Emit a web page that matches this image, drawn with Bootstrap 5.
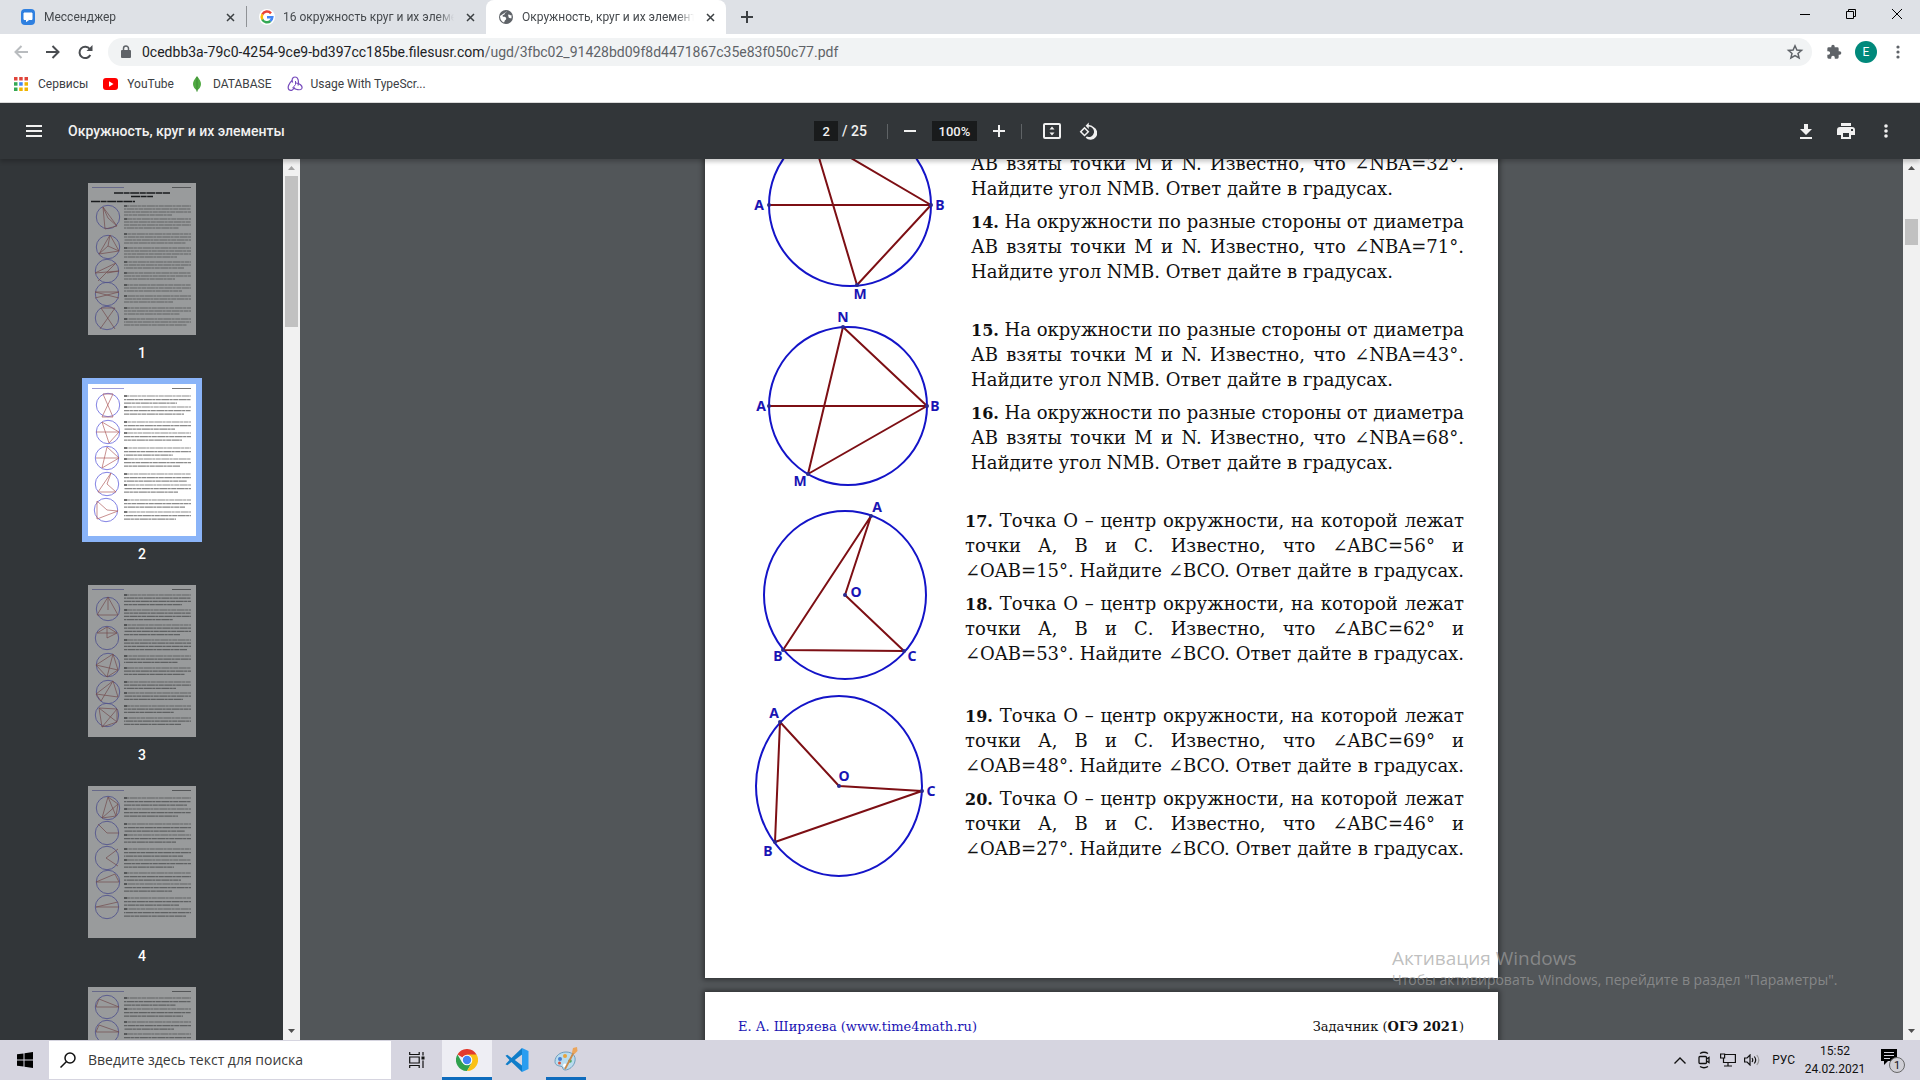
<!DOCTYPE html>
<html lang="ru">
<head>
<meta charset="utf-8">
<meta name="viewport" content="width=device-width, initial-scale=1">
<title>Окружность, круг и их элементы</title>
<link href="https://cdn.jsdelivr.net/npm/bootstrap@5.3.0/dist/css/bootstrap.min.css" rel="stylesheet">
<style>
  body { font-family: Roboto, "Open Sans", sans-serif; font-size: 12px; line-height: 16px; color: #3c4043; }
  button, input { font: inherit; color: inherit; }
  .plain { border: 0; background: none; padding: 0; display: inline-flex; align-items: center; justify-content: center; flex: none; color: inherit; }
  svg { flex: none; display: block; }

  /* browser tabs */
  .tabstrip { height: 34px; background: #dee1e6; }
  .tab { width: 239px; padding: 0 8px 0 12px; color: #45494d; }
  .tab-first { width: 247px; padding-left: 20px; border-right: 1px solid; border-image: linear-gradient(transparent 20%, #8f9296 20%, #8f9296 78%, transparent 78%) 1; }
  .tab-on { width: 240px; background: #fff; border-radius: 8px 8px 0 0; }
  .tab-text { flex: 1 1 0; min-width: 0; overflow: hidden; white-space: nowrap; -webkit-mask-image: linear-gradient(90deg, #000 90%, transparent); mask-image: linear-gradient(90deg, #000 90%, transparent); }
  .tab .plain { width: 16px; height: 16px; }
  .winbtn { width: 46px; height: 28px; color: #000; }

  /* address bar */
  .addressbar { height: 36px; padding: 4px 8px 4px 5px; background: #fff; color: #5f6368; }
  .navbtn { width: 32px; height: 28px; }
  .omnibox { height: 28px; border-radius: 14px; background: #f1f3f4; padding: 0 8px 0 10px; margin: 0 14px 0 7px; }
  .url { font-size: 14px; line-height: 20px; color: #5f6368; white-space: nowrap; }
  .url b { font-weight: 400; color: #202124; }
  .avatar { width: 22px; height: 22px; border-radius: 50%; background: #00897b; color: #fff; margin: 0 7px 0 13px; }
  .bookmarks { height: 33px; padding: 0 14px 4px; border-bottom: 1px solid #dcdcdc; background: #fff; gap: 15px; }
  .bookmarks a { color: #3c4043; text-decoration: none; gap: 8px; }

  /* viewer toolbar */
  .pdfbar { height: 56px; padding: 0 20px; background: #323639; color: #f1f1f1; font-size: 14px; font-weight: 500; position: relative; z-index: 2; box-shadow: 0 3px 4px rgba(0,0,0,.2); }
  .pdfbar input { background: #191b1c; border: 0; height: 20px; padding: 0; text-align: center; font-size: 13px; }
  .in-page { width: 24px; }
  .in-zoom { width: 45px; }
  .iconbtn { width: 28px; height: 28px; }
  .vline { width: 1px; height: 15px; background: #5f6366; }
  .vline-lead { margin-left: 20px; }
  .flex-even { flex: 1 1 0; }
  .bar-left { gap: 20px; }
  .bar-right { gap: 12px; }

  /* thumbnails */
  .thumbs { width: 283px; background: #323639; overflow: hidden; padding-top: 24px; }
  .thumb { width: 120px; height: 201px; padding-left: 6px; margin-left: 82px; color: #fff; text-align: center; font-weight: 500; font-size: 14px; }
  .thumb svg { background: #fff; opacity: .5; }
  .thumb span { display: block; width: 108px; padding-top: 10px; }
  .thumb-on svg { opacity: 1; outline: 6px solid #8ab4f8; }

  /* scroll tracks */
  .track { width: 17px; background: #f1f1f1; }
  .grip { width: 13px; background: #c1c1c1; }

  /* document */
  .viewer { background: #525659; overflow: hidden; font-family: "DejaVu Serif", "Liberation Serif", serif; color: #111; }
  .sheet { width: 793px; background: #fff; flex: none; box-shadow: 0 0 5px 2px rgba(0,0,0,.4); margin: 0 auto 14px; }
  .sheet-top { margin-top: -8px; height: 827px; padding-right: 34px; padding-left: 40px; }
  .sheet-next { padding: 27px 34px 0 33px; height: 120px; font-size: 13px; }
  .author { color: #1a14b4; }
  .task { gap: 26px; margin-bottom: 33px; }
  .task-b { gap: 20px; margin-bottom: 37px; }
  .task svg { overflow: visible; }
  .task-text { flex: 1 1 0; min-width: 0; }
  .task p { margin: 0 0 8px; font-size: 18px; line-height: 25px; }
  .task p:last-child { margin-bottom: 0; }
  .task b { font-size: 16px; line-height: 20px; }
  .ln { display: block; text-align: justify; text-align-last: justify; white-space: nowrap; }
  .ln-end { text-align-last: left; }
  .fig-c { fill: none; stroke: #1414c8; stroke-width: 2; }
  .fig-l { fill: none; stroke: #7d0f14; stroke-width: 2; stroke-linejoin: round; }
  .fig-d { fill: #2a2a90; }
  .task text { font: 700 14px "Noto Sans", sans-serif; fill: #1a14b4; text-anchor: middle; }

  .watermark { position: absolute; right: 74px; bottom: 90px; z-index: 3; color: rgba(160,160,160,.68); pointer-events: none; width: 454px; white-space: nowrap; font-family: "Open Sans", sans-serif; }
  .watermark div { font-size: 19px; line-height: 24px; }
  .watermark p { font-size: 14px; line-height: 20px; margin: 0; }

  /* taskbar */
  .taskbar { height: 40px; background: #d6d5e0; color: #111; position: relative; z-index: 2; }
  .startbtn { width: 49px; height: 40px; }
  .searchbox { width: 342px; height: 38px; background: #fff; padding: 0 11px; gap: 12px; margin-right: 1px; }
  .searchbox input { border: 0; outline: 0; background: none; width: 270px; padding: 0; font-family: "Open Sans", sans-serif; font-size: 14px; color: #333; }
  .searchbox input::placeholder { color: #3a3a3a; opacity: 1; }
  .appbtn { width: 50px; height: 40px; }
  .app-on { background: #eeeef4; box-shadow: inset 0 -3px #0f6cbd; }
  .app-open { width: 40px; margin-left: 4px; box-shadow: inset 0 -3px #0f6cbd; }
  .clock { line-height: 18px; width: 72px; text-align: center; }
  .lang { padding: 0 4px 0 8px; }
  .traybtn { width: 24px; height: 40px; }
  .notebtn { width: 42px; height: 40px; margin-right: 7px; }
</style>
<script src="https://cdn.jsdelivr.net/npm/bootstrap@5.3.0/dist/js/bootstrap.bundle.min.js"></script>
</head>
<body class="vh-100 d-flex flex-column overflow-hidden position-relative">

<nav class="tabstrip d-flex flex-shrink-0" aria-label="Вкладки">
  <div class="tab tab-first d-flex align-items-center gap-2">
    <svg width="16" height="16"><rect x="1" width="14" height="16" rx="4" fill="#2f80e0"/><path d="M4 4h8v6.500H9L6.500 12.500v-2H4z" fill="#fff" stroke="#fff" stroke-linejoin="round"/></svg>
    <span class="tab-text">Мессенджер</span>
    <button class="plain" aria-label="Закрыть"><svg width="9" height="9"><path d="M1 1l7 7M8 1l-7 7" stroke="#3c4043" stroke-width="1.500"/></svg></button>
  </div>
  <div class="tab d-flex align-items-center gap-2">
    <svg width="16" height="16" fill="none" stroke-width="2.500"><circle cx="8" cy="8" r="8" fill="#fff"/><path d="M12 4.300A5.300 5.300 0 0 0 3.300 5.500" stroke="#ea4335"/><path d="M3.400 5.300A5.500 5.500 0 0 0 3.400 10.700" stroke="#fbbc05"/><path d="M3.300 10.500A5.300 5.300 0 0 0 11.500 12" stroke="#34a853"/><path d="M8 8.200h5.300A5.200 5.200 0 0 1 11.300 12" stroke="#4285f4"/></svg>
    <span class="tab-text">16 окружность круг и их элемент</span>
    <button class="plain" aria-label="Закрыть"><svg width="9" height="9"><path d="M1 1l7 7M8 1l-7 7" stroke="#3c4043" stroke-width="1.500"/></svg></button>
  </div>
  <div class="tab tab-on d-flex align-items-center gap-2">
    <svg width="16" height="16"><circle cx="8" cy="8" r="7" fill="#5f6368"/><path d="M9 2.200c-.3 1.300-2.300 1-2.300 2.500 0 1.300-1.500 1-2 1.800s.6 1.300 1.800 1.300 1.700 1 1.700 2c0 1.200-1.500 1.200-1.700 2.800L6 13.500A6 6 0 0 1 2.200 8.500L2 7M10.500 5.500c1 0 1.500.8 3 .8v3c-1.500 0-3-.3-3-1.600s-1-1.500 0-2.200z" fill="#fff"/></svg>
    <span class="tab-text">Окружность, круг и их элементы</span>
    <button class="plain" aria-label="Закрыть"><svg width="9" height="9"><path d="M1 1l7 7M8 1l-7 7" stroke="#3c4043" stroke-width="1.500"/></svg></button>
  </div>
  <button class="plain ms-2" aria-label="Новая вкладка"><svg width="26" height="12" viewBox="0 0 26 12"><path d="M13 0v12M7 6h12" stroke="#3c4043" stroke-width="2"/></svg></button>
  <div class="ms-auto d-flex align-items-start">
    <button class="plain winbtn" aria-label="Свернуть"><svg width="10" height="10"><path d="M0 5.500h10" stroke="currentColor"/></svg></button>
    <button class="plain winbtn" aria-label="Окно"><svg width="10" height="10" fill="none" stroke="currentColor"><path d="M.5 2.500h7v7h-7zM2.500 2.500v-2h7v7h-2"/></svg></button>
    <button class="plain winbtn" aria-label="Закрыть окно"><svg width="10" height="10"><path d="M0 0l10 10M10 0L0 10" stroke="currentColor"/></svg></button>
  </div>
</nav>

<div class="addressbar d-flex align-items-center flex-shrink-0">
  <button class="plain navbtn" aria-label="Назад"><svg width="14" height="14" fill="none" stroke="#b9bcbf" stroke-width="2"><path d="M14 7H1.500M7.500 1L1.500 7l6 6"/></svg></button>
  <button class="plain navbtn" aria-label="Вперёд"><svg width="14" height="14" fill="none" stroke="#4a4d51" stroke-width="2"><path d="M0 7h12.500M6.500 1l6 6-6 6"/></svg></button>
  <button class="plain navbtn" aria-label="Обновить"><svg width="15" height="15" fill="none" stroke="#4a4d51" stroke-width="2"><path d="M12.300 10A5.700 5.700 0 1 1 11.800 4"/><path d="M14.500 0v6h-6z" fill="#4a4d51" stroke="none"/></svg></button>
  <div class="omnibox d-flex align-items-center flex-grow-1">
    <svg width="16" height="14" viewBox="0 0 16 14"><rect x="3" y="5" width="10" height="8" rx="1" fill="#5f6368"/><path d="M5.500 5.500V3.500a2.500 2.500 0 0 1 5 0v2" fill="none" stroke="#5f6368" stroke-width="1.500"/></svg>
    <span class="url ms-2"><b>0cedbb3a-79c0-4254-9ce9-bd397cc185be.filesusr.com</b>/ugd/3fbc02_91428bd09f8d4471867c35e83f050c77.pdf</span>
    <button class="plain ms-auto" aria-label="В закладки"><svg width="18" height="18" viewBox="0 0 18 18"><path d="M9 2.800l1.900 4.200 4.600.4-3.500 3 1.100 4.500L9 12.500l-4.100 2.400L6 10.400l-3.500-3 4.600-.4z" fill="none" stroke="#5f6368" stroke-width="1.500"/></svg></button>
  </div>
  <button class="plain" aria-label="Расширения"><svg width="16" height="16" viewBox="0 0 24 24"><path fill="#5f6368" d="M20.500 11H19V7a2 2 0 0 0-2-2h-4V3.500a2.500 2.500 0 0 0-5 0V5H4a2 2 0 0 0-2 2v3.800h1.500a2.700 2.700 0 0 1 0 5.400H2V20a2 2 0 0 0 2 2h3.800v-1.500a2.700 2.700 0 0 1 5.400 0V22H17a2 2 0 0 0 2-2v-4h1.500a2.500 2.500 0 0 0 0-5z"/></svg></button>
  <button class="plain avatar" aria-label="Профиль">E</button>
  <button class="plain iconbtn" aria-label="Меню"><svg width="4" height="14" fill="#5f6368"><circle cx="2" cy="2" r="1.600"/><circle cx="2" cy="7" r="1.600"/><circle cx="2" cy="12" r="1.600"/></svg></button>
</div>

<div class="bookmarks d-flex align-items-center flex-shrink-0">
  <a href="#" class="d-flex align-items-center"><svg width="16" height="14"><g fill="#e0443a"><path d="M0 0h3.500v3.500H0z"/><path d="M5.200 0h3.500v3.500H5.200z"/><path d="M10.500 0H14v3.500h-3.500z"/></g><path d="M0 5.200h3.500v3.500H0z" fill="#34a853"/><path d="M5.200 5.200h3.500v3.500H5.200z" fill="#4285f4"/><path d="M10.500 5.200H14v3.500h-3.500z" fill="#f0b400"/><path d="M0 10.500h3.500V14H0z" fill="#34a853"/><path d="M5.200 10.500h3.500V14H5.200zM10.500 10.500H14V14h-3.500z" fill="#f0b400"/></svg>Сервисы</a>
  <a href="#" class="d-flex align-items-center"><svg width="16" height="12"><rect width="15" height="12" rx="3" fill="#f00"/><path d="M6 3.300v5.400L10.500 6z" fill="#fff"/></svg>YouTube</a>
  <a href="#" class="d-flex align-items-center"><svg width="16" height="16"><path d="M8 0c2.800 3.500 4 5.500 4 8s-1.500 4.800-3.500 6l-.2 2h-.6l-.2-2C5.500 12.800 4 10.500 4 8s1.200-4.500 4-8z" fill="#4faa41"/><path d="M8 1v14" stroke="#3b8033" stroke-width=".8"/></svg>DATABASE</a>
  <a href="#" class="d-flex align-items-center"><svg width="16" height="16" fill="none" stroke="#764abc" stroke-width="1.200"><path d="M11 9.500C12 6 11.500 1 8 1 5 1 4.500 4.500 5.700 6.500"/><path d="M5.200 4.500C2 7 0 11.500 2 13.800c2.200 1.500 5-.3 5.200-2.800"/><path d="M5.500 11.500c3 1.800 7.800 3.500 9.300 1 1.200-2.500-2.500-5.800-6.300-5.500"/><path d="M8.500 5v3.500l-2 2.500" stroke-width="1"/></svg>Usage With TypeScr...</a>
</div>

<header class="pdfbar d-flex align-items-center flex-shrink-0">
  <div class="flex-even bar-left d-flex align-items-center">
    <button class="plain iconbtn" aria-label="Меню документа" data-bs-toggle="collapse" data-bs-target="#thumbs"><svg width="16" height="12"><path d="M0 1h16M0 6h16M0 11h16" stroke="#f1f1f1" stroke-width="2"/></svg></button>
    <span>Окружность, круг и их элементы</span>
  </div>
  <div class="d-flex align-items-center pe-1">
    <input class="in-page" value="2" aria-label="Страница"><span class="ms-1">/ 25</span>
    <span class="vline vline-lead me-2"></span>
    <button class="plain iconbtn" aria-label="Уменьшить"><svg width="12" height="12"><path d="M0 6h12" stroke="#f1f1f1" stroke-width="2"/></svg></button>
    <input class="in-zoom mx-2" value="100%" aria-label="Масштаб">
    <button class="plain iconbtn" aria-label="Увеличить"><svg width="12" height="12"><path d="M0 6h12M6 0v12" stroke="#f1f1f1" stroke-width="2"/></svg></button>
    <span class="vline ms-2 me-3"></span>
    <button class="plain iconbtn" aria-label="По ширине"><svg width="18" height="16" fill="none" stroke="#f1f1f1" stroke-width="2"><rect x="1" y="1" width="16" height="14" rx="1"/><path d="M9 3.500L11.500 6.500h-5zM9 12.500L6.500 9.500h5z" fill="#f1f1f1" stroke="none"/></svg></button>
    <button class="plain iconbtn ms-2" aria-label="Повернуть"><svg width="18" height="18" viewBox="0 0 24 24" fill="#f1f1f1"><path d="M7.340 6.410L.860 12.900l6.490 6.480 6.490-6.480-6.500-6.490zM3.690 12.900l3.660-3.660L11 12.900l-3.660 3.660-3.650-3.660zm15.670-6.260A8.950 8.950 0 0 0 13 4V.760L8.760 5 13 9.240V6a7 7 0 1 1-2.640 13.470l-1.490 1.490A9 9 0 1 0 19.360 6.640z"/></svg></button>
  </div>
  <div class="flex-even bar-right d-flex align-items-center justify-content-end">
    <button class="plain iconbtn" aria-label="Скачать"><svg width="12" height="15" fill="#f1f1f1"><path d="M4 0h4v5h4l-6 6-6-6h4zM0 13h12v2H0z"/></svg></button>
    <button class="plain iconbtn" aria-label="Печать"><svg width="18" height="16" fill="#f1f1f1"><path d="M4 0h10v3H4zM3 4h12a3 3 0 0 1 3 3v5h-4v4H4v-4H0V7a3 3 0 0 1 3-3zm3 6v4h6v-4zM14 6v2h2V6z" fill-rule="evenodd"/></svg></button>
    <button class="plain iconbtn" aria-label="Ещё"><svg width="4" height="14" fill="#f1f1f1"><circle cx="2" cy="2" r="1.800"/><circle cx="2" cy="7" r="1.800"/><circle cx="2" cy="12" r="1.800"/></svg></button>
  </div>
</header>

<main class="d-flex flex-grow-1 overflow-hidden">
  <aside class="thumbs flex-shrink-0" id="thumbs"></aside>
  <div class="track d-flex flex-column align-items-center flex-shrink-0">
    <svg width="17" height="17"><path d="M5 11h7L8.500 7z" fill="#a3a3a3"/></svg>
    <div class="grip" style="height:151px"></div>
    <svg class="mt-auto" width="17" height="17"><path d="M5 6h7l-3.500 4z" fill="#505050"/></svg>
  </div>

  <article class="viewer flex-grow-1 d-flex flex-column">
    <section class="sheet sheet-top">
      <div class="task d-flex">
        <svg width="200" height="133" viewBox="745 151 200 133">
          <circle class="fig-c" cx="850" cy="205" r="81"/>
          <path class="fig-l" d="M817 151L857 285L931 205L839 151M769 205H931"/>
          <g class="fig-d"><circle cx="769" cy="205" r="2"/><circle cx="931" cy="205" r="2"/><circle cx="857" cy="285" r="2"/></g>
          <text x="759" y="210">A</text><text x="940" y="210">B</text><text x="860" y="299">M</text>
        </svg>
        <div class="task-text">
          <p><span class="ln">АВ взяты точки М и N. Известно, что ∠NBA=32°.</span><span class="ln ln-end">Найдите угол NMB. Ответ дайте в градусах.</span></p>
          <p><span class="ln"><b>14.</b> На окружности по разные стороны от диаметра</span><span class="ln">АВ взяты точки М и N. Известно, что ∠NBA=71°.</span><span class="ln ln-end">Найдите угол NMB. Ответ дайте в градусах.</span></p>
        </div>
      </div>
      <div class="task d-flex">
        <svg width="200" height="158" viewBox="745 317 200 158">
          <circle class="fig-c" cx="848" cy="406" r="79"/>
          <path class="fig-l" d="M769 406H927L843 327L808 474L927 406"/>
          <g class="fig-d"><circle cx="769" cy="406" r="2"/><circle cx="927" cy="406" r="2"/><circle cx="843" cy="327" r="2"/><circle cx="808" cy="474" r="2"/></g>
          <text x="843" y="322">N</text><text x="761" y="411">A</text><text x="935" y="411">B</text><text x="800" y="486">M</text>
        </svg>
        <div class="task-text">
          <p><span class="ln"><b>15.</b> На окружности по разные стороны от диаметра</span><span class="ln">АВ взяты точки М и N. Известно, что ∠NBA=43°.</span><span class="ln ln-end">Найдите угол NMB. Ответ дайте в градусах.</span></p>
          <p><span class="ln"><b>16.</b> На окружности по разные стороны от диаметра</span><span class="ln">АВ взяты точки М и N. Известно, что ∠NBA=68°.</span><span class="ln ln-end">Найдите угол NMB. Ответ дайте в градусах.</span></p>
        </div>
      </div>
      <div class="task task-b d-flex">
        <svg width="200" height="158" viewBox="745 508 200 158">
          <ellipse class="fig-c" cx="845" cy="595" rx="81" ry="84"/>
          <path class="fig-l" d="M871 516L845 595L904 651L783 650Z"/>
          <g class="fig-d"><circle cx="871" cy="516" r="2"/><circle cx="845" cy="595" r="2"/><circle cx="904" cy="651" r="2"/><circle cx="783" cy="650" r="2"/></g>
          <text x="877" y="512">A</text><text x="856" y="597">O</text><text x="778" y="661">B</text><text x="912" y="661">C</text>
        </svg>
        <div class="task-text">
          <p><span class="ln"><b>17.</b> Точка О – центр окружности, на которой лежат</span><span class="ln">точки А, В и С. Известно, что ∠ABC=56° и</span><span class="ln">∠OAB=15°. Найдите ∠BCO. Ответ дайте в градусах.</span></p>
          <p><span class="ln"><b>18.</b> Точка О – центр окружности, на которой лежат</span><span class="ln">точки А, В и С. Известно, что ∠ABC=62° и</span><span class="ln">∠OAB=53°. Найдите ∠BCO. Ответ дайте в градусах.</span></p>
        </div>
      </div>
      <div class="task task-b d-flex">
        <svg width="200" height="158" viewBox="745 703 200 158">
          <ellipse class="fig-c" cx="839" cy="786" rx="83" ry="90"/>
          <path class="fig-l" d="M780 722L839 786L922 791L775 842Z"/>
          <g class="fig-d"><circle cx="780" cy="722" r="2"/><circle cx="839" cy="786" r="2"/><circle cx="922" cy="791" r="2"/><circle cx="775" cy="842" r="2"/></g>
          <text x="774" y="718">A</text><text x="844" y="781">O</text><text x="768" y="856">B</text><text x="931" y="796">C</text>
        </svg>
        <div class="task-text">
          <p><span class="ln"><b>19.</b> Точка О – центр окружности, на которой лежат</span><span class="ln">точки А, В и С. Известно, что ∠ABC=69° и</span><span class="ln">∠OAB=48°. Найдите ∠BCO. Ответ дайте в градусах.</span></p>
          <p><span class="ln"><b>20.</b> Точка О – центр окружности, на которой лежат</span><span class="ln">точки А, В и С. Известно, что ∠ABC=46° и</span><span class="ln">∠OAB=27°. Найдите ∠BCO. Ответ дайте в градусах.</span></p>
        </div>
      </div>
    </section>
    <section class="sheet sheet-next d-flex justify-content-between">
      <span class="author">Е. А. Ширяева (www.time4math.ru)</span>
      <span>Задачник (<b>ОГЭ 2021</b>)</span>
    </section>
  </article>
  <div class="track d-flex flex-column align-items-center flex-shrink-0">
    <svg width="17" height="17"><path d="M5 11h7L8.500 7z" fill="#505050"/></svg>
    <div class="grip" style="height:26px;margin-top:43px"></div>
    <svg class="mt-auto" width="17" height="17"><path d="M5 6h7l-3.500 4z" fill="#505050"/></svg>
  </div>
</main>

<div class="watermark">
  <div>Активация Windows</div>
  <p>Чтобы активировать Windows, перейдите в раздел "Параметры".</p>
</div>

<footer class="taskbar d-flex align-items-center flex-shrink-0">
  <button class="plain startbtn" aria-label="Пуск"><svg width="16" height="16"><path d="M0 2.300L6.500 1.400v6.100H0zM7.500 1.200L16 0v7.500H7.500zM0 8.500h6.500v6.100L0 13.700zM7.500 8.500H16V16l-8.500-1.200z"/></svg></button>
  <label class="searchbox d-flex align-items-center">
    <svg width="16" height="16" fill="none" stroke="#111" stroke-width="1.500"><circle cx="10" cy="6" r="5"/><path d="M6.500 9.500L.5 15.500"/></svg>
    <input type="text" placeholder="Введите здесь текст для поиска" aria-label="Поиск">
  </label>
  <button class="plain appbtn" aria-label="Представление задач"><svg width="16" height="16" fill="none" stroke="#111" stroke-width="1.200"><path d="M.7 0v2.500h9.500V0M.7 16v-2.500h9.500V16M.7 5h9.500v6H.7zM14 0v3.500M14 8.500V16"/><path d="M12.500 4.500h3v3h-3z" fill="#111" stroke="none"/></svg></button>
  <button class="plain appbtn app-on" aria-label="Chrome"><svg width="22" height="22" viewBox="0 0 24 24"><path d="M12 12L1.600 6A12 12 0 0 1 22.400 6z" fill="#e33b2e"/><path d="M1.600 6A12 12 0 0 0 12 24l5.200-9L12 12 6.800 15z" fill="#30a14e"/><path d="M12 6h10.400A12 12 0 0 1 12 24l5.200-9z" fill="#fbc116"/><circle cx="12" cy="12" r="5.800" fill="#fff"/><circle cx="12" cy="12" r="4.600" fill="#4285f4"/></svg></button>
  <button class="plain appbtn" aria-label="VS Code"><svg width="24" height="24" viewBox="0 0 24 24"><path d="M17 0L6.500 10 2.300 6.800.5 7.700 4.500 12 .5 16.300l1.800.9L6.500 14 17 24zM17 6.500L9.800 12 17 17.500z" fill="#0f7dc9" fill-rule="evenodd"/><path d="M17 0l6.500 3v18L17 24z" fill="#2a9df0"/></svg></button>
  <button class="plain appbtn app-open" aria-label="Paint"><svg width="24" height="26" viewBox="0 0 24 26"><path d="M12 5c6 0 10 3.500 9 9s-6 9-10 9c-3 0-1.500-3.500-4-3.800C4 19 1 18 1 14.500 1 9 6 5 12 5z" fill="#b9dcef" stroke="#6e9dbd"/><circle cx="6" cy="12" r="2" fill="#4a7fd0"/><circle cx="11" cy="9" r="2" fill="#e9a33c"/><circle cx="5.500" cy="16" r="1.500" fill="#d9513c"/><circle cx="11" cy="18.500" r="2" fill="#fff"/><circle cx="16" cy="14" r="1.800" fill="#50a860"/><path d="M21 3L11 22" stroke="#c98a4a" stroke-width="1.800"/><path d="M19 1l4-1 .5 4-3 3-2.500-1.500z" fill="#eba55c"/></svg></button>

  <div class="ms-auto d-flex align-items-center">
    <button class="plain traybtn" aria-label="Скрытые значки"><svg width="12" height="7" fill="none" stroke="#111" stroke-width="1.400"><path d="M.5 6.500L6 1l5.500 5.500"/></svg></button>
    <button class="plain traybtn" aria-label="Камера"><svg width="12" height="18" fill="none" stroke="#111" stroke-width="1.300"><rect x="1" y="5.500" width="7.500" height="7" rx="1"/><path d="M8.500 8l2.500-1.500v5L8.500 10M2 2.500Q6 0 10 2.500M2 15.500Q6 18 10 15.500"/></svg></button>
    <button class="plain traybtn" aria-label="Сеть"><svg width="16" height="14" fill="none" stroke="#111" stroke-width="1.200"><path d="M5 1.500h10.400v8H3.500V5M4 13h8M8 9.500V13M.6 1h4v4h-4z"/></svg></button>
    <button class="plain traybtn" aria-label="Громкость"><svg width="16" height="12" fill="none" stroke="#111" stroke-width="1.200"><path d="M.6 4h2.500L6 1v10L3.100 8H.6zM8 4q1.500 2 0 4M10.300 2.500q2.800 3.500 0 7"/><path d="M12.800 1q4 5 0 10" stroke="#999"/></svg></button>
    <span class="lang">РУС</span>
    <div class="clock"><time class="d-block">15:52</time><time class="d-block">24.02.2021</time></div>
    <button class="plain notebtn" aria-label="Уведомления"><svg width="26" height="26" viewBox="0 0 26 26"><path d="M2 2h16v12h-9l-4 4v-4H2z" fill="#000"/><path d="M5 5.500h10M5 8.500h10M5 11.500h6" stroke="#d6d5e0"/><circle cx="18" cy="18" r="7.500" fill="#d0cfd6" stroke="#666"/><text x="18" y="22" font-size="11" text-anchor="middle" fill="#111">1</text></svg></button>
  </div>
</footer>

<script>
  // Miniature pages: circle centres, chords, and paragraphs as [top, number of lines]
  const pages = [
    { head: true, pitch: 3, c: [[20,34],[20,64],[19,88],[19,111],[19,135]],
      l: ["15,24 29,43 17,46 15,24 20,35 29,43","22,52 31,68 11,71 22,52 20,63 11,71M20,63 31,68","7,90 31,88M7,90 28,80 10,98M31,88 19,90","7,109 31,115M7,115 31,109M7,109 31,109","13,125 27,146M27,125 12,146M13,125 27,125"],
      p: [[23,4],[36,4],[51,4],[65,4],[79,3],[90,3],[102,3],[113,3],[125,3],[136,3]] },
    { on: true, pitch: 3.6, c: [[20,21],[20,48],[19,74],[19,100],[18,126]],
      l: ["15,10 25,33M25,10 14,33M15,10 25,10M14,33 25,33","8,48 31,48 14,38 21,59 31,48","8,74 31,74 19,63 14,84 31,74","23,89 19,100 28,108 10,108 23,89","9,117 19,126 30,127 9,135 9,117"],
      p: [[12,3],[23,3],[38,3],[49,3],[64,3],[75,3],[90,3],[101,3],[116,3],[128,3]] },
    { pitch: 3.2, c: [[20,24],[19,53],[20,80],[20,107],[19,130]],
      l: ["20,12 9,30 30,30 20,12 20,25","9,48 19,42 29,48 9,48M19,42 19,53 29,48","25,69 8,80 19,92 30,85 25,69 19,92M8,80 30,85","25,96 8,109 30,112 25,96 13,116 8,109","11,123 29,124 29,137 14,142 11,123 29,137M29,124 14,142"],
      p: [[10,4],[25,4],[40,4],[55,4],[71,3],[83,3],[97,3],[108,3],[121,3],[133,3]] },
    { pitch: 3.6, c: [[20,22],[19,47],[19,72],[20,96],[19,121]],
      l: ["20,11 30,18 28,30 14,32 20,11 28,30M14,32 30,18","10,38 19,47 31,47","30,63 18,72 30,80","8,96 31,96 27,88 8,96","8,121 31,121M8,121 30,116"],
      p: [[12,3],[23,3],[38,3],[49,3],[63,3],[74,3],[87,3],[98,3],[112,3],[123,3]] },
    { pitch: 3.6, c: [[19,20],[19,45]],
      l: ["8,20 31,20 11,12 8,20","8,45 31,45 11,38 8,45"],
      p: [[11,3],[22,3],[35,3],[47,3]] }
  ];
  document.getElementById("thumbs").innerHTML = pages.map((pg, i) => {
    const circles = pg.c.map(([x, y]) => `<circle cx="${x}" cy="${y}" r="11.7"/>`).join("");
    const chords = pg.l.map(d => `<path d="M${d}"/>`).join("");
    let lines = "";
    pg.p.forEach(([y, n], k) => {
      for (let j = 0; j < n; j++) {
        const end = j === n - 1 ? 84 + (k * 7 + i * 5) % 16 : 103;
        lines += `<path d="M36 ${y + j * pg.pitch}H${end}" stroke-dashoffset="${(k * 5 + j * 3) % 11}"/>`;
      }
      lines += `<path d="M36 ${y}h3" stroke="#444" stroke-dasharray="none"/>`;
    });
    const title = pg.head ? '<path d="M26 10H82M43 13.500H65M3 18.500H47" stroke="#000" stroke-width="1.700" stroke-dasharray="9 .6 6 .6"/>' : "";
    const label = i < 4 ? `<span>${i + 1}</span>` : "";
    return `<div class="thumb ${pg.on ? "thumb-on" : ""}"><svg width="108" height="152" fill="none">
      <path d="M4 4.500H36" stroke="#9c9cd8"/><path d="M84 4.500H103" stroke="#777"/>${title}
      <g stroke="#7474e0" stroke-width=".9">${circles}</g><g stroke="#b06060" stroke-width=".7">${chords}</g>
      <g stroke="#8c8c8c" stroke-width="1.200" stroke-dasharray="5 .5 8 .4 3 .5">${lines}</g></svg>${label}</div>`;
  }).join("");
</script>
</body>
</html>
